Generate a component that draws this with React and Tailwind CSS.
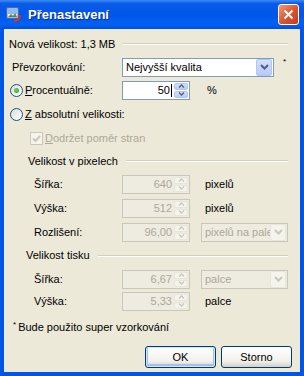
import React from "react";

const font = "font-['Tahoma','Liberation_Sans',sans-serif]";

const Chevron = ({ color = "#4D6185" }) => (
  <svg width="9" height="6" viewBox="0 0 9 6">
    <path d="M1 1l3.5 3.5L8 1" stroke={color} strokeWidth="2" fill="none" />
  </svg>
);

const SpinArrow = ({ up, color }) => (
  <svg width="7" height="4" viewBox="0 0 7 4">
    <path d={up ? "M1 3.5L3.5 1L6 3.5" : "M1 0.5L3.5 3L6 0.5"} stroke={color} strokeWidth="1.3" fill="none" />
  </svg>
);

const Spin = ({ disabled }) => {
  const box = disabled
    ? "bg-[#F4F3EE] border border-[#E8E6DC]"
    : "bg-[linear-gradient(to_bottom,#D4E0FC,#B7CBF8)] border border-[#B2C6F3]";
  const c = disabled ? "#C9C7BA" : "#4D6185";
  return (
    <div className="flex flex-col w-[15px] h-full py-px pr-px gap-px">
      <div className={`flex-1 flex items-center justify-center rounded-[2px] ${box}`}>
        <SpinArrow up color={c} />
      </div>
      <div className={`flex-1 flex items-center justify-center rounded-[2px] ${box}`}>
        <SpinArrow color={c} />
      </div>
    </div>
  );
};

const NumInput = ({ value, disabled, caret }) => (
  <div
    className={`w-[68px] h-[19px] flex items-center border ${
      disabled ? "border-[#C9C7BA] bg-[#EEEBE0] text-[#ACA899]" : "border-[#7F9DB9] bg-white text-black"
    }`}
  >
    <div className="flex-1 flex justify-end items-center pr-[2px]">
      {value}
      {caret && <span className="w-px h-[13px] bg-black ml-px" />}
    </div>
    <Spin disabled={disabled} />
  </div>
);

const Select = ({ value, disabled, w }) => (
  <div
    className={`${w} h-[19px] flex items-center border ${
      disabled ? "border-[#C9C7BA] bg-[#EEEBE0] text-[#ACA899]" : "border-[#7F9DB9] bg-white text-black"
    }`}
  >
    <div className="flex-1 min-w-0 pl-[3px] overflow-hidden whitespace-nowrap">{value}</div>
    <div
      className={`w-[16px] h-[17px] mr-px shrink-0 flex items-center justify-center rounded-[2px] border ${
        disabled
          ? "bg-[#F4F3EE] border-[#E8E6DC]"
          : "bg-[linear-gradient(to_bottom,#D4E0FC,#B7CBF8)] border-[#B2C6F3]"
      }`}
    >
      <Chevron color={disabled ? "#C9C7BA" : "#4D6185"} />
    </div>
  </div>
);

const Radio = ({ checked }) => (
  <div className="w-[13px] h-[13px] rounded-full border border-[#1C5180] bg-[linear-gradient(135deg,#DCDCD7,#FFFFFF)] flex items-center justify-center">
    {checked && <div className="w-[5px] h-[5px] rounded-full bg-[radial-gradient(circle_at_40%_40%,#6FD36F,#21A121)]" />}
  </div>
);

const Rule = () => (
  <div className="flex-1 ml-[8px] flex flex-col">
    <div className="h-px bg-[#D0D0BF]" />
    <div className="h-px bg-white" />
  </div>
);

const Button = ({ children, primary }) => (
  <button
    className={`w-[71px] h-[22px] rounded-[3px] border border-[#003C74] bg-[linear-gradient(to_bottom,#FFFFFF,#F2F1EC_70%,#D6D0C5)] text-black text-[11px] ${
      primary ? "shadow-[inset_0_0_0_1px_#CEE7FF,inset_0_-1px_0_2px_#A9BDF0]" : ""
    }`}
  >
    {children}
  </button>
);

const TitleIcon = () => (
  <svg width="16" height="16" viewBox="0 0 16 16">
    <rect x="1" y="1" width="11" height="10" fill="#E8EEF8" stroke="#6B7FA8" />
    <rect x="2" y="2" width="9" height="5" fill="#8FB8F0" />
    <path d="M2 10l3-3 2 2 2-3 2 4z" fill="#5A8A3C" />
    <path d="M8 14c2 0 5-1 6-5" stroke="#D8322A" strokeWidth="2" fill="none" />
    <path d="M12 8l3 0-1 3z" fill="#D8322A" />
  </svg>
);

export default function App() {
  return (
    <div className={`w-[304px] h-[376px] flex flex-col bg-[#0055E5] ${font} text-[11px] text-black`}>
      {/* title bar */}
      <div className="h-[29px] flex items-center bg-[linear-gradient(to_bottom,#3D8BF5_0%,#0A5CE8_12%,#0056E8_50%,#0061F5_85%,#004ED8_100%)] pl-[6px] pr-[5px]">
        <TitleIcon />
        <span className="ml-[6px] text-white font-bold text-[13px] [text-shadow:1px_1px_0_#0A2B8C]">Přenastavení</span>
        <div className="ml-auto w-[21px] h-[21px] rounded-[3px] border border-white bg-[linear-gradient(135deg,#F09A7A,#D8542E_55%,#C23C18)] flex items-center justify-center">
          <svg width="11" height="11" viewBox="0 0 11 11">
            <path d="M1.5 1.5l8 8M9.5 1.5l-8 8" stroke="white" strokeWidth="2" />
          </svg>
        </div>
      </div>

      {/* body */}
      <div className="flex-1 mx-[4px] mb-[4px] bg-[#ECE9D8] flex flex-col pt-[3px] pr-[12px]">
        <div className="h-[24px] flex items-center pl-[5px]">
          <span>Nová velikost: 1,3 MB</span>
          <Rule />
        </div>

        <div className="h-[22px] flex items-center pl-[8px]">
          <span className="w-[110px]">Převzorkování:</span>
          <Select value="Nejvyšší kvalita" w="w-[152px]" />
          <span className="ml-[9px] self-start text-[8px] leading-none mt-[2px]">*</span>
        </div>

        <div className="h-[24px] flex items-center pl-[6px]">
          <Radio checked />
          <span className="ml-[2px] w-[97px]">
            <span className="underline">P</span>rocentuálně:
          </span>
          <NumInput value="50" caret />
          <span className="ml-[17px]">%</span>
        </div>

        <div className="h-[24px] flex items-center pl-[6px]">
          <Radio />
          <span className="ml-[2px]">
            <span className="underline">Z</span> absolutní velikosti:
          </span>
        </div>

        <div className="h-[24px] flex items-center pl-[26px] text-[#ACA899]">
          <div className="w-[13px] h-[13px] border border-[#CAC8BB] bg-[#F4F3EE] flex items-center justify-center">
            <svg width="9" height="9" viewBox="0 0 9 9">
              <path d="M1 4.5l2.5 2.5L8 2" stroke="#CAC8BB" strokeWidth="2" fill="none" />
            </svg>
          </div>
          <span className="ml-[2px]">
            <span className="underline">D</span>održet poměr stran
          </span>
        </div>

        <div className="h-[22px] flex items-center pl-[24px]">
          <span>Velikost v pixelech</span>
          <Rule />
        </div>

        <div className="h-[24px] flex items-center pl-[30px]">
          <span className="w-[88px]">Šířka:</span>
          <NumInput value="640" disabled />
          <span className="ml-[15px]">pixelů</span>
        </div>

        <div className="h-[24px] flex items-center pl-[30px]">
          <span className="w-[88px]">Výška:</span>
          <NumInput value="512" disabled />
          <span className="ml-[15px]">pixelů</span>
        </div>

        <div className="h-[24px] flex items-center pl-[30px]">
          <span className="w-[88px]">Rozlišení:</span>
          <NumInput value="96,00" disabled />
          <Select value="pixelů na pale" disabled w="w-[87px] ml-[11px]" />
        </div>

        <div className="h-[23px] flex items-center pl-[22px]">
          <span>Velikost tisku</span>
          <Rule />
        </div>

        <div className="h-[24px] flex items-center pl-[30px]">
          <span className="w-[88px]">Šířka:</span>
          <NumInput value="6,67" disabled />
          <Select value="palce" disabled w="w-[87px] ml-[11px]" />
        </div>

        <div className="h-[20px] flex items-center pl-[30px]">
          <span className="w-[88px]">Výška:</span>
          <NumInput value="5,33" disabled />
          <span className="ml-[15px]">palce</span>
        </div>

        <div className="h-[32px] flex items-center pl-[9px]">
          <span className="text-[8px] self-start mt-[10px] leading-none">*</span>
          <span className="ml-[2px]">Bude použito super vzorkování</span>
        </div>

        <div className="mt-[3px] flex justify-end gap-[5px] mr-[-4px]">
          <Button primary>OK</Button>
          <Button>Storno</Button>
        </div>
      </div>
    </div>
  );
}
